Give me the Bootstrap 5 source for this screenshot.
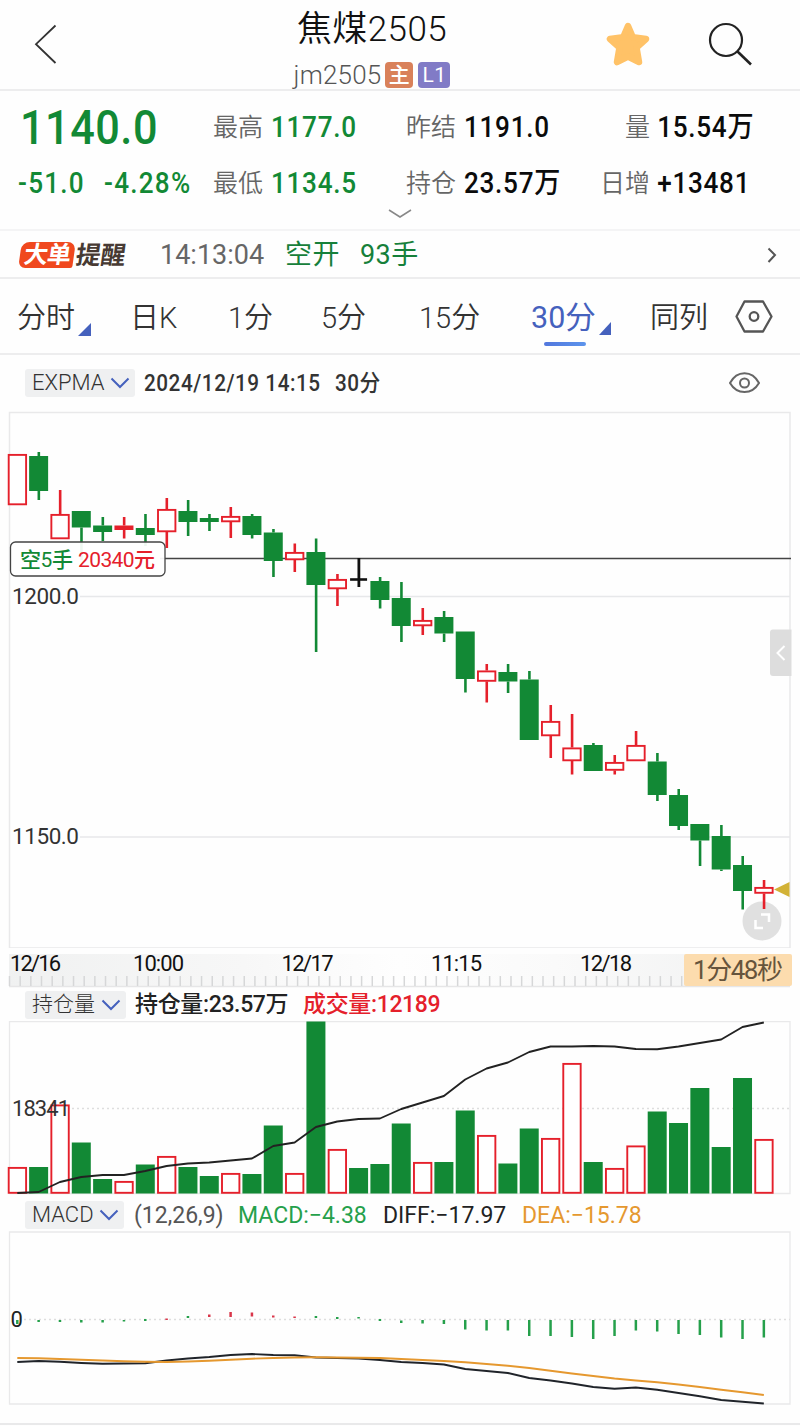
<!DOCTYPE html>
<html lang="zh-CN">
<head>
<meta charset="utf-8">
<meta name="viewport" content="width=device-width, initial-scale=1">
<title>焦煤2505</title>
<link href="https://cdn.jsdelivr.net/npm/bootstrap@5.3.0/dist/css/bootstrap.min.css" rel="stylesheet">
<style>
:root{--up:#e5202b;--down:#128935;--rule:#ededee;--blue:#4060bd}
body{width:800px;height:1426px;overflow:hidden;background:#fefefe;color:#222;font-family:Roboto,"Noto Sans CJK SC",sans-serif;line-height:1;white-space:nowrap}
svg{display:block;flex:none}
.topbar{display:grid;grid-template-columns:272px 200px 128px 1fr;height:91px;border-bottom:2px solid var(--rule)}
.back{margin:24px 0 0 34px}
.title-name{font-size:35px;font-weight:350;margin-top:12px;height:50px;color:#111;letter-spacing:.4px}
.title-code{font-size:26px;font-weight:350;color:#555;height:26px;letter-spacing:.2px}
.tag{width:28px;height:26px;border-radius:4px;font-size:21px;color:#fff;font-weight:500}
.tag-main{background:#d9815a;margin-left:4px}
.tag-level{background:#817bc6;width:32px;margin-left:5px;font-weight:400;letter-spacing:.5px}
.quote{height:140px;border-bottom:2px solid #f4f4f5}
.quote-grid{display:grid;grid-template-columns:195px 58px 135px 58px 136px 50px 1fr;grid-template-rows:73px 38px;padding-left:18px;align-items:center;height:111px}
.g-down{color:var(--down)}
.g-up{color:var(--up)}
.narrow{display:inline-block;transform:scaleX(.9);transform-origin:left}
.last{font-size:48px;font-weight:500;letter-spacing:.6px;margin-left:2px}
.key{font-size:25px;font-weight:350;color:#666}
.val{font-size:29px;font-weight:500;color:#0b0b0b;letter-spacing:.8px}
.val.g-down{color:var(--down)}
.change{letter-spacing:1.4px}
.alertrow{height:48px;border-bottom:2px solid var(--rule);padding-top:2px}
.big{width:54px;height:26px;margin-left:20px;background:#f0481e;border-radius:8px 8px 2px 7px;transform:skewX(-8deg);color:#fff;font-size:24px;font-weight:700;letter-spacing:-1px}
.remind{width:51px;font-size:25px;font-weight:700;color:#473a33;margin-left:2px;transform:skewX(-8deg);letter-spacing:-.3px}
.clock{font-size:27px;color:#666;margin-left:33px;width:125px;letter-spacing:0}
.order{font-size:27px;font-weight:400;color:#16803a;letter-spacing:.4px}
.periods{display:grid;grid-template-columns:113px 98px 93px 98px 112px 119px 85px 1fr;height:76px;border-bottom:2px solid var(--rule);font-size:29px;font-weight:350;color:#333;padding-left:17px;padding-top:25px}
.periods .now{color:#4561bd;font-weight:400;font-size:30.5px;position:relative;margin-top:-1px}
.now::after{content:"";position:absolute;left:13px;top:39px;width:42px;height:4px;border-radius:2px;background:linear-gradient(90deg,#5277dd,#5c94ec)}
.corner{margin:19px 0 0 3px}
.indic{height:56px}
.pick{margin-left:25px;height:28px;background:#eff0f1;border-radius:3px;padding:0 5px 0 7px;font-size:22px;font-weight:300;color:#333;justify-content:space-between}
.stamp{font-size:23px;color:#333;font-weight:500;letter-spacing:.6px}
.subhead{font-size:23px;color:#222}
.subhead .oi-text{font-weight:500;letter-spacing:-.35px}
.chart{font-family:Roboto,"Noto Sans CJK SC",sans-serif}
</style>
<script src="https://cdn.jsdelivr.net/npm/bootstrap@5.3.0/dist/js/bootstrap.bundle.min.js"></script>
</head>
<body>
<header class="topbar">
  <svg class="back" width="24" height="40" fill="none" stroke="#333" stroke-width="1.8"><path d="M21.5 1.5 2 20.2 21.5 39"/></svg>
  <div>
    <div class="title-name text-center">焦煤2505</div>
    <div class="title-code d-flex align-items-center justify-content-center">jm2505<span class="tag tag-main d-flex align-items-center justify-content-center">主</span><span class="tag tag-level d-flex align-items-center justify-content-center">L1</span></div>
  </div>
  <span></span>
  <svg width="200" height="90" fill="none"><path d="M28 26 32.800 37.200 46 39 36.500 47.500 39 62 28 56.500 17 62 19.500 47.500 10 39 23.200 37.200Z" fill="#ffc267" stroke="#ffc267" stroke-width="6.500" stroke-linejoin="round"/><circle cx="126" cy="40" r="16" stroke="#222" stroke-width="2.200"/><path d="M137.500 51.500 151 64.500" stroke="#222" stroke-width="2.600"/></svg>
</header>

<section class="quote">
  <div class="quote-grid">
    <div><span class="last narrow g-down">1140.0</span></div><div class="key">最高</div><div class="val narrow g-down">1177.0</div>
    <div class="key">昨结</div><div class="val narrow">1191.0</div><div class="key text-end">量</div><div class="val narrow ps-2">15.54万</div>
    <div class="val g-down d-flex"><span style="width:86px"><span class="narrow change">-51.0</span></span><span class="narrow change">-4.28%</span></div><div class="key">最低</div><div class="val narrow g-down">1134.5</div>
    <div class="key">持仓</div><div class="val narrow">23.57万</div><div class="key text-end">日增</div><div class="val narrow ps-2">+13481</div>
  </div>
  <svg class="mx-auto" width="24" height="16" fill="none" stroke="#888" stroke-width="1.500"><path d="M1 8 12 15 23 8"/></svg>
</section>

<section class="alertrow d-flex align-items-center">
  <span class="big d-flex align-items-center justify-content-center">大单</span><span class="remind">提醒</span>
  <span class="clock">14:13:04</span><span class="order" style="width:75px">空开</span><span class="order">93手</span>
  <svg class="ms-auto" style="margin-right:23px" width="10" height="16" fill="none" stroke="#555" stroke-width="2"><path d="M1.500 1.500 8 8 1.500 15"/></svg>
</section>

<nav class="periods">
  <span class="d-flex">分时<svg class="corner" width="13" height="13"><path d="M13 0V13H0Z" fill="#4561bd"/></svg></span>
  <span>日K</span><span>1分</span><span>5分</span><span>15分</span>
  <span class="now d-flex">30分<svg class="corner" width="12" height="13"><path d="M12 0V13H0Z" fill="#4561bd"/></svg></span>
  <span>同列</span>
  <svg width="38" height="34" viewBox="734 300 38 34" fill="none" stroke="#555" stroke-width="2.300" style="margin-top:-4px"><path d="M743.500 301.500H762L770.500 316.500 762 331.500H743.500L735.500 316.500Z" stroke-linejoin="round"/><circle cx="753" cy="316.500" r="4.300"/></svg>
</nav>

<section class="indic d-flex align-items-center">
  <div class="pick d-flex align-items-center" style="width:110px">EXPMA<svg width="20" height="12" fill="none" stroke="#4561bd" stroke-width="2"><path d="M1.500 1.500 10 10 18.500 1.500"/></svg></div>
  <span style="margin-left:9px;width:191px"><span class="stamp narrow">2024/12/19 14:15</span></span><span class="stamp narrow">30分</span>
  <svg class="ms-auto" style="margin-right:39px" width="33" height="24" fill="none" stroke="#666" stroke-width="2"><path d="M2 12C9-1 24-1 31 12 24 24 9 24 2 12Z"/><circle cx="16.500" cy="12" r="4.500"/></svg>
</section>

<svg id="price" class="chart" width="800" height="537" viewBox="0 411 800 537">
  <path d="M9.500 412.500H790V948H9.500Z" fill="none" stroke="#e9e9ea" stroke-width="1.500"/>
  <path d="M80 596.500H790M80 837H790" stroke="#e7e8ea" stroke-width="1.500"/>
  <path d="M160 558.500H791" stroke="#444" stroke-width="1.300"/>
  <circle cx="762" cy="921" r="19.500" fill="#d7d7d7" fill-opacity=".78"/>
  <path d="M761 914.500H769V922M755.500 920V928H763" fill="none" stroke="#fff" stroke-width="2.500"/>
  <g class="plot"></g>
  <g font-size="22.500" font-weight="400" fill="#333"><text x="12" y="603.500" textLength="67">1200.0</text><text x="12" y="844" textLength="67">1150.0</text></g>
  <rect x="10.500" y="542" width="154.500" height="34" rx="5" fill="#fff" fill-opacity=".93" stroke="#444" stroke-width="1.300"/>
  <g font-size="21" font-weight="450"><text x="20" y="567" fill="#128935" textLength="53">空5手</text><text x="78" y="567" fill="#e5202b" textLength="77">20340元</text></g>
  <path d="M774 889.500 789.500 882V897Z" fill="#d2b236"/>
  <path d="M791.500 629.500H773Q770 629.500 770 632.500V673Q770 676 773 676H791.500Z" fill="#ddd"/>
  <path d="M784.500 646 777.500 653 784.500 660" fill="none" stroke="#fff" stroke-width="2"/>
</svg>

<svg id="axis" class="chart" width="800" height="40" viewBox="0 948 800 40">
  <defs><linearGradient id="band"><stop offset="0" stop-color="#f0f1f1"/><stop offset=".3" stop-color="#f7f7f7"/><stop offset=".5" stop-color="#fefefe"/><stop offset=".7" stop-color="#fafafa"/><stop offset="1" stop-color="#f0f1f1"/></linearGradient></defs>
  <rect x="9" y="954" width="781" height="32" fill="url(#band)"/>
  <path d="M9 986.500H790" stroke="#e6e6e7" stroke-width="1.500"/>
  <g class="plot"></g>
  <g font-size="22" font-weight="400" fill="#111"><text x="10" y="970.500" textLength="51">12/16</text><text x="133" y="970.500" textLength="51">10:00</text><text x="281.500" y="970.500" textLength="52">12/17</text><text x="431" y="970.500" textLength="51">11:15</text><text x="580" y="970.500" textLength="52">12/18</text></g>
  <rect x="684" y="954" width="108" height="32" rx="2" fill="#fcdcae"/>
  <text x="693" y="979" font-size="26" fill="#66543c" textLength="90">1分48秒</text>
</svg>

<section class="subhead d-flex align-items-center" style="height:33px">
  <div class="pick d-flex align-items-center" style="width:101px;font-size:21px">持仓量<svg width="20" height="12" fill="none" stroke="#4561bd" stroke-width="2"><path d="M1.500 1.500 10 10 18.500 1.500"/></svg></div>
  <span class="oi-text" style="margin-left:9px;width:168px">持仓量:23.57万</span><span class="oi-text g-up">成交量:12189</span>
</section>

<svg id="volume" class="chart" width="800" height="174" viewBox="0 1021 800 174">
  <path d="M9.500 1021.500H790V1193.500H9.500Z" fill="none" stroke="#e9e9ea" stroke-width="1.300"/>
  <path d="M72 1108.500H790" stroke="#dedede" stroke-width="1.500" stroke-dasharray="2 3"/>
  <g class="plot"></g>
  <text x="12" y="1116" font-size="22" fill="#333" textLength="58">18341</text>
</svg>

<section class="subhead d-flex align-items-center" style="height:36px;padding-top:4px">
  <div class="pick d-flex align-items-center" style="width:99px">MACD<svg width="20" height="12" fill="none" stroke="#4561bd" stroke-width="2"><path d="M1.500 1.500 10 10 18.500 1.500"/></svg></div>
  <span style="margin-left:10px;width:104px;color:#555">(12,26,9)</span><span style="width:145px;color:#25a04b">MACD:−4.38</span><span style="width:139px">DIFF:−17.97</span><span style="color:#e5982f">DEA:−15.78</span>
</section>

<svg id="macd" class="chart" width="800" height="195" viewBox="0 1231 800 195">
  <path d="M9.500 1232H790V1404H9.500Z" fill="none" stroke="#e9e9ea" stroke-width="1.300"/>
  <path d="M24 1319.500H790" stroke="#dedede" stroke-width="1.500" stroke-dasharray="2 3"/>
  <g class="plot"></g>
  <text x="10.500" y="1327" font-size="22" fill="#222">0</text>
  <path d="M0 1424H800" stroke="#e9e9ea" stroke-width="2"/>
</svg>

<script>
// Each candle: [direction, high, bodyTop, bodyBottom, low, volumeTop, macdTop, macdBottom]
const bars=[
['r',454,454,505,505,1167,1320,1324],['g',452,456,491,500,1167,1320,1322],['r',490,514,539,539,1104.5,1320,1322],['g',511,511,527.5,560,1142.5,1320,1322.5],
['g',517,525.5,532,541,1179,1320,1322.5],['s',517,525.5,530,538.5,1181,1320,1321.5],['g',514,528,535,546,1164.5,1319,1321],['r',498,509,532,548,1156,1318.5,1320],
['g',500,511,522,536,1167,1316,1318],['g',514,518,522,531,1176,1314.5,1317],['r',507,516,522,538,1173,1312,1317],['g',514,516,535,538.5,1174,1312.5,1316.5],
['g',529,532.5,561,577,1125.5,1315.5,1317.5],['r',543.5,552,560,572,1173,1316.5,1318],['g',538.5,552,585,652,1021.5,1316,1318],['r',574,579,589,606,1149,1317,1319],
['k',558,579,580,587,1168,1317,1318.5],['g',577,581,600,608.5,1164,1319,1321],['g',582,598,626,642,1123.5,1320.5,1323],['r',608,620,626,635,1162,1320,1323.5],
['g',611,617,633.5,642,1162,1320,1324],['g',631.5,631.5,679,692.5,1110.5,1320,1329.5],['r',664,670.5,681.5,702.5,1135,1320,1330.5],['g',664,672,681.5,693,1163.5,1320,1330.5],
['g',671,679.5,740,740,1128.5,1320,1336],['r',705,721,736,758,1138,1320,1336],['r',714,747.5,761,774.5,1063,1320,1337],['g',743,745,771,771,1162,1320,1339],
['r',755,762,770.5,774.5,1168,1320,1336],['r',731,745,761,761,1145.5,1320,1330.5],['g',753,761.5,795,801,1111.5,1320,1331.5],['g',789,795,826,830,1123,1320,1334],
['g',824,824,840.5,866,1088,1320,1335],['g',825,836,869.5,871,1147,1320,1337.5],['g',856,865,891,909.5,1078,1320,1339],['r',880,887,893.5,909,1139,1320,1337.5]];
const oi=[1193,1192,1182,1177,1175,1175,1171,1166,1163.5,1162.5,1160.5,1158.5,1146,1142.5,1127,1121.5,1119,1118.5,1109,1102.5,1096,1079.5,1068.5,1062.5,1052,1046.5,1046.5,1046,1046.5,1049,1049.3,1046.5,1043,1039.5,1027,1022.5];
const diff=[1362,1361,1361.8,1363,1363.8,1363.5,1363.2,1360.5,1358.5,1357,1355,1354,1355,1355.3,1357.5,1358,1358.5,1360,1362,1363,1364.5,1369,1371,1373,1378,1380.5,1383.5,1387,1388.7,1387.5,1389.7,1393,1396.3,1400,1401.7,1403.5];
const dea=[1358,1358.3,1359,1359.8,1360.5,1361.2,1361.7,1362,1361.5,1360.7,1359.7,1358.7,1358,1357.5,1357.3,1357.5,1357.8,1358,1359,1360,1361,1362.3,1364,1365.7,1368,1370.7,1373.5,1376,1378.5,1380.5,1382.3,1384.5,1387,1389.7,1392.3,1395];
const red='#e5202b',green='#128935',cx=i=>17.3+21.33*i;
const seg=(x,a,b,c,w)=>`<path d="M${x} ${a}V${b}" stroke="${c}" stroke-width="${w}"/>`;
const box=(x,a,b,hollow,c)=>hollow
  ?`<rect x="${x-8.6}" y="${a+.9}" width="17.4" height="${Math.max(b-a-1.6,1)}" fill="#fff" stroke="${c}" stroke-width="1.9"/>`
  :`<rect x="${x-9.5}" y="${a}" width="19" height="${b-a}" fill="${c}"/>`;
const line=(ys,c)=>`<polyline points="${ys.map((y,i)=>cx(i)+','+y).join(' ')}" fill="none" stroke="${c}" stroke-width="1.9" stroke-linejoin="round"/>`;
let p='',v='',m='',t='';
bars.forEach(([d,h,a,b,l,vt,m1,m2],i)=>{
  const x=cx(i),hollow=d==='r',c=(hollow||d==='s')?red:green;
  if(d==='k')p+=seg(x+.3,h,l,'#111',2.8)+`<path d="M${x-8.5} 579.500H${x+8.5}" stroke="#111" stroke-width="2.600"/>`;
  else{ if(h<a)p+=seg(x+.2,h,a,c,2.6); if(l>b)p+=seg(x+.2,b,l,c,2.6); p+=box(x,a,b,hollow,c); }
  v+=box(x,vt,1193.5,hollow||d==='s',c);
  m+=seg(x,m1,m2,(i===7||(i>8&&i<14))?'#d9364a':'#25a04b',2.5);
});
for(let x=9.5;x<684;x+=10.67)t+=seg(x,976,986,'#d6d7d8',1.5);
const put=(id,s)=>document.querySelector('#'+id+' .plot').innerHTML=s;
put('price',p);put('axis',t);put('volume',v+line(oi,'#222'));put('macd',m+line(diff,'#20242a')+line(dea,'#e5982f'));
</script>
</body>
</html>
